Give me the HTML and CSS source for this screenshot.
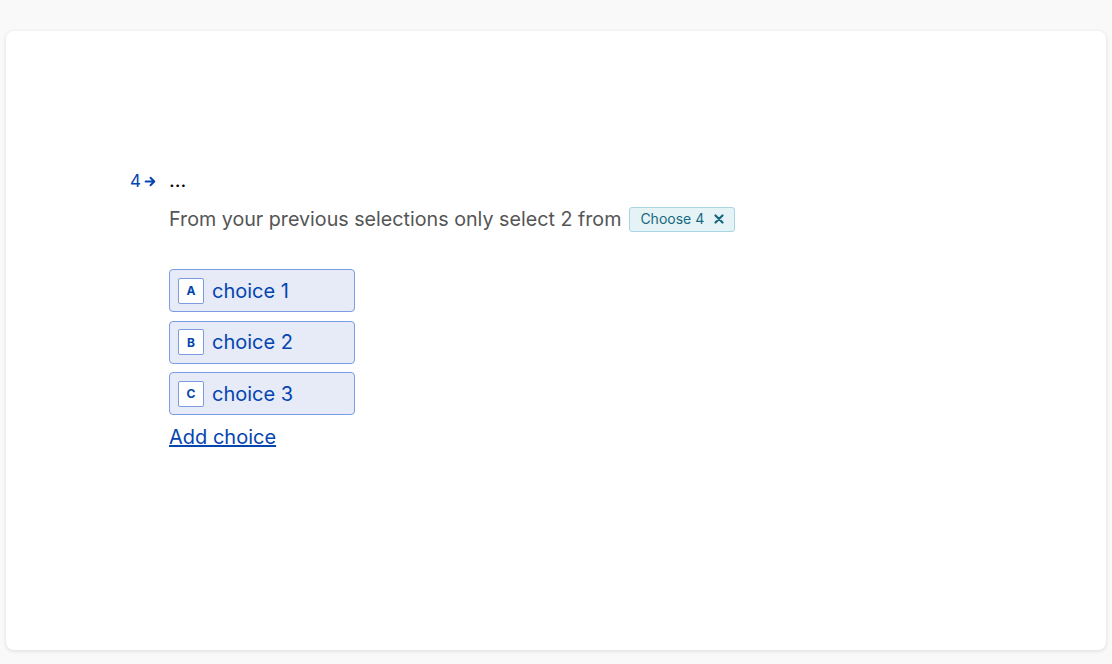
FILE: index.html
```html
<!DOCTYPE html>
<html>
<head>
  <meta charset="utf-8" />
  <title>Question</title>
  <link rel="stylesheet" href="styles.css">
</head>
<body>
  <div class="card">
    <div class="question">
      <div class="num">4<svg class="arrow" width="13" height="13" viewBox="0 0 12 12"><path d="M1.5 6h8M6 2.5L9.5 6 6 9.5" fill="none" stroke="#0445af" stroke-width="1.8" stroke-linecap="round" stroke-linejoin="round"/></svg></div>
      <div class="body">
        <div class="title">...</div>
        <div class="desc">From your previous selections only select 2 from <span class="tag">Choose 4 <svg class="x" width="10" height="10" viewBox="0 0 10 10"><path d="M1.5 1.5l7 7M8.5 1.5l-7 7" stroke="#17687e" stroke-width="2.2" stroke-linecap="round"/></svg></span></div>
        <div class="choices">
          <div class="choice"><span class="key">A</span>choice 1</div>
          <div class="choice"><span class="key">B</span>choice 2</div>
          <div class="choice"><span class="key">C</span>choice 3</div>
        </div>
        <a class="add" href="#">Add choice</a>
      </div>
    </div>
  </div>
</body>
</html>
```
FILE: styles.css
```css
body {
  margin: 0;
  padding: 31px 6px 14px 6px;
  background: #f9f9f9;
  font-family: Inter, "Liberation Sans", Arial, sans-serif;
}
.card {
  background: #fff;
  border-radius: 8px;
  box-shadow: 0 1px 4px rgba(0,0,0,0.12);
  height: 619px;
  box-sizing: border-box;
  padding: 141px 0 0 124px;
}
.question {
  display: flex;
}
.num {
  width: 39px;
  color: #0445af;
  font-size: 17px;
  display: flex;
  align-items: center;
  height: 18px;
  gap: 3px;
}
.title {
  font-size: 20px;
  color: #000;
  line-height: 22px;
  margin-top: -3px;
}
.desc {
  margin-top: 14px;
  font-size: 19.7px;
  color: #555;
  display: flex;
  align-items: center;
  gap: 8px;
  line-height: 28px;
}
.tag {
  display: inline-flex;
  align-items: center;
  background: #e5f3f7;
  border: 1px solid #a8d6e3;
  color: #17687e;
  font-size: 14px;
  border-radius: 3px;
  height: 25px;
  padding: 0 10px;
  box-sizing: border-box;
  gap: 10px;
}
.choices {
  margin-top: 36px;
  display: flex;
  flex-direction: column;
  gap: 8.5px;
}
.choice {
  width: 186px;
  height: 43px;
  box-sizing: border-box;
  background: #e6ebf7;
  border: 1px solid #7b9ce0;
  border-radius: 4px;
  display: flex;
  align-items: center;
  padding-left: 8px;
  color: #0445af;
  font-size: 20px;
}
.key {
  width: 26px;
  height: 26px;
  box-sizing: border-box;
  background: #fff;
  border: 1px solid #7b9ce0;
  border-radius: 2px;
  font-size: 12px;
  font-weight: bold;
  display: flex;
  align-items: center;
  justify-content: center;
  margin-right: 8px;
}
.add {
  display: inline-block;
  margin-top: 10px;
  color: #0445af;
  font-size: 20px;
}
```
